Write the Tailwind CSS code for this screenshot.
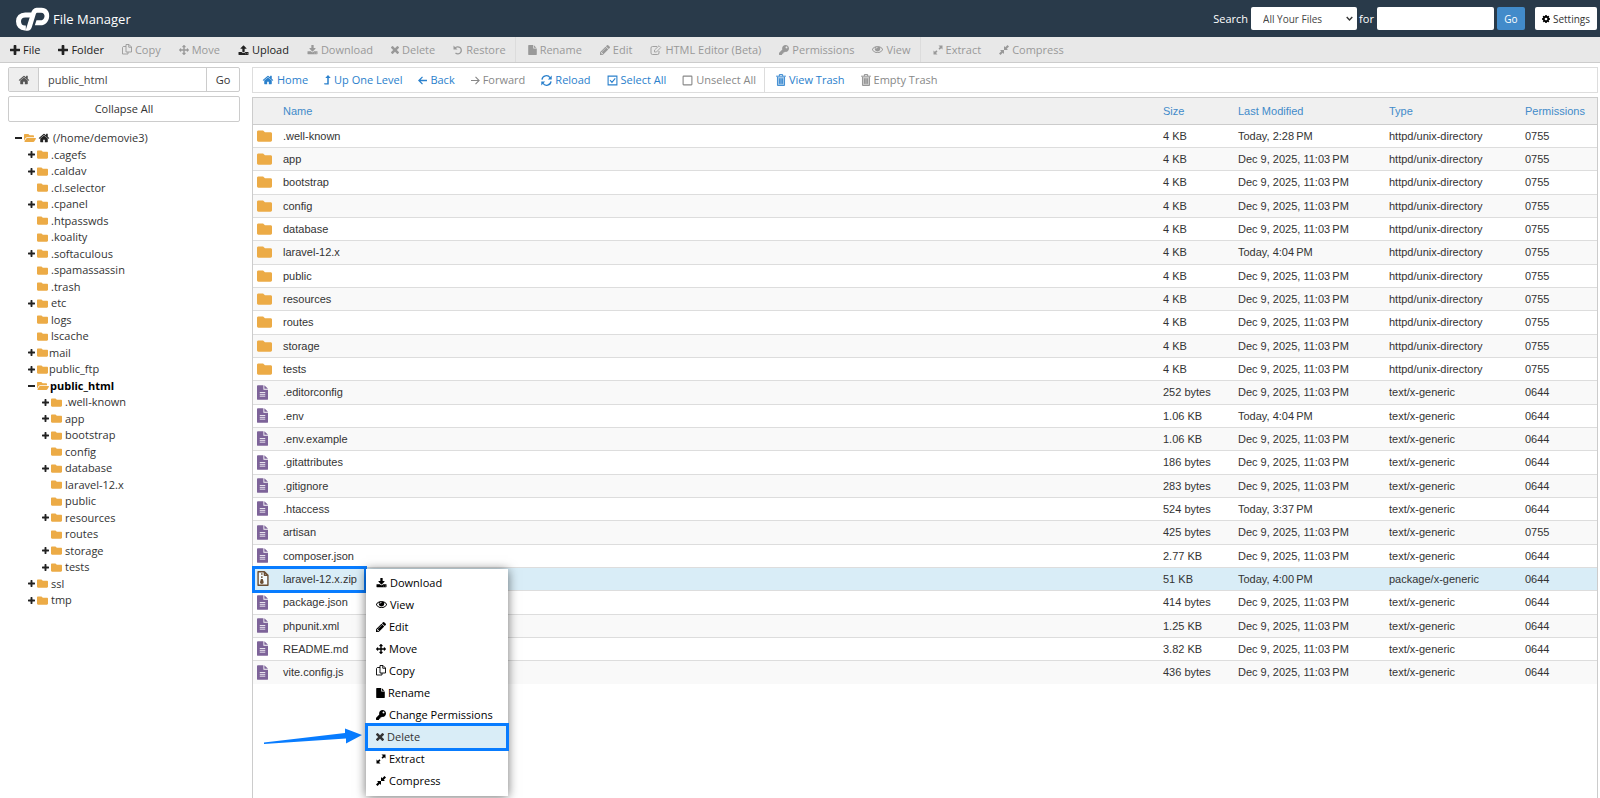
<!DOCTYPE html>
<html lang="en">
<head>
<meta charset="utf-8">
<title>File Manager</title>
<script src="https://cdn.jsdelivr.net/npm/@tailwindcss/browser@4"></script>
</head>
<body class="flex h-screen flex-col overflow-hidden bg-white font-['Open_Sans',sans-serif] text-[11px] leading-4 text-[#333]">

<svg class="hidden" aria-hidden="true">
  <symbol id="plus" viewBox="192 128 1408 1408"><path d="M1600 736v192q0 40-28 68t-68 28h-416v416q0 40-28 68t-68 28h-192q-40 0-68-28t-28-68v-416h-416q-40 0-68-28t-28-68v-192q0-40 28-68t68-28h416v-416q0-40 28-68t68-28h192q40 0 68 28t28 68v416h416q40 0 68 28t28 68z"/></symbol>
  <symbol id="home" viewBox="64 128 1664 1536"><path d="M1472 992v480q0 26-19 45t-45 19h-384v-384h-256v384h-384q-26 0-45-19t-19-45v-480q0-1 .5-3t.5-3l575-474 575 474q1 2 1 6zm223-69l-62 74q-8 9-21 11h-3q-13 0-21-7l-692-577-692 577q-12 8-24 7-13-2-21-11l-62-74q-8-10-7-23.500t11-21.500l719-599q32-26 76-26t76 26l244 204v-195q0-14 9-23t23-9h192q14 0 23 9t9 23v408l219 182q10 8 11 21.500t-7 23.500z"/></symbol>
  <symbol id="download" viewBox="64 0 1664 1664"><path d="M1344 1344q0-26-19-45t-45-19-45 19-19 45 19 45 45 19 45-19 19-45zm256 0q0-26-19-45t-45-19-45 19-19 45 19 45 45 19 45-19 19-45zm128-224v320q0 40-28 68t-68 28h-1472q-40 0-68-28t-28-68v-320q0-40 28-68t68-28h465l135 136q58 56 136 56t136-56l136-136h464q40 0 68 28t28 68zm-325-569q17 41-14 70l-448 448q-18 19-45 19t-45-19l-448-448q-31-29-14-70 17-39 59-39h256v-448q0-26 19-45t45-19h256q26 0 45 19t19 45v448h256q42 0 59 39z"/></symbol>
  <symbol id="upload" viewBox="64 0 1664 1664"><path d="M1344 1472q0-26-19-45t-45-19-45 19-19 45 19 45 45 19 45-19 19-45zm256 0q0-26-19-45t-45-19-45 19-19 45 19 45 45 19 45-19 19-45zm128-224v320q0 40-28 68t-68 28h-1472q-40 0-68-28t-28-68v-320q0-40 28-68t68-28h427q21 56 70.500 92t110.500 36h256q61 0 110.500-36t70.500-92h427q40 0 68 28t28 68zm-325-648q-17 40-59 40h-256v448q0 26-19 45t-45 19h-256q-26 0-45-19t-19-45v-448h-256q-42 0-59-40-17-39 14-69l448-448q18-19 45-19t45 19l448 448q31 30 14 69z"/></symbol>
  <symbol id="times" viewBox="302 366 1188 1188"><path d="M1490 1322q0 40-28 68l-136 136q-28 28-68 28t-68-28l-294-294-294 294q-28 28-68 28t-68-28l-136-136q-28-28-28-68t28-68l294-294-294-294q-28-28-28-68t28-68l136-136q28-28 68-28t68 28l294 294 294-294q28-28 68-28t68 28l136 136q28 28 28 68t-28 68l-294 294 294 294q28 28 28 68z"/></symbol>
  <symbol id="eye" viewBox="0 320 1792 1280"><path d="M1664 960q-152-236-381-353 61 104 61 225 0 185-131.500 316.500t-316.500 131.500-316.500-131.500-131.500-316.500q0-121 61-225-229 117-381 353 133 205 333.500 326.500t434.500 121.500 434.500-121.500 333.500-326.500zm-720-384q0-20-14-34t-34-14q-125 0-214.500 89.500t-89.500 214.500q0 20 14 34t34 14 34-14 14-34q0-86 61-147t147-61q20 0 34-14t14-34zm848 384q0 34-20 69-140 230-376.500 368.500t-499.500 138.500-499.500-139-376.500-368q-20-35-20-69t20-69q140-229 376.500-368t499.500-139 499.500 139 376.500 368q20 35 20 69z"/></symbol>
  <symbol id="pencil" viewBox="128 148 1516 1516"><path d="M491 1536l91-91-235-235-91 91v107h128v128h107zm523-928q0-22-22-22-10 0-17 7l-542 542q-7 7-7 17 0 22 22 22 10 0 17-7l542-542q7-7 7-17zm-54-192l416 416-832 832h-416v-416zm683 96q0 53-37 90l-166 166-416-416 166-165q36-38 90-38 53 0 91 38l235 234q37 39 37 91z"/></symbol>
  <symbol id="move" viewBox="0 0 1792 1792"><path d="M1792 896q0 26-19 45l-256 256q-19 19-45 19t-45-19-19-45v-128h-384v384h128q26 0 45 19t19 45-19 45l-256 256q-19 19-45 19t-45-19l-256-256q-19-19-19-45t19-45 45-19h128v-384h-384v128q0 26-19 45t-45 19-45-19l-256-256q-19-19-19-45t19-45l256-256q19-19 45-19t45 19 19 45v128h384v-384h-128q-26 0-45-19t-19-45 19-45l256-256q19-19 45-19t45 19l256 256q19 19 19 45t-19 45-45 19h-128v384h384v-128q0-26 19-45t45-19 45 19l256 256q19 19 19 45z"/></symbol>
  <symbol id="copy" viewBox="0 0 20 22"><path fill="none" stroke="currentColor" stroke-width="1.800" stroke-linejoin="round" d="M8 1h6l5 5v10H8zM13.500 1v5.500H19M8 5H2.500L1 6.500V20h11v-4"/></symbol>
  <symbol id="file" viewBox="128 0 1536 1792"><path d="M1152 512v-472q22 14 36 28l408 408q14 14 28 36h-472zm-128 32q0 40 28 68t68 28h544v1056q0 40-28 68t-68 28h-1344q-40 0-68-28t-28-68v-1600q0-40 28-68t68-28h800v544z"/></symbol>
  <symbol id="key" viewBox="0 0 512 512"><path d="M512 176C512 273 433 352 336 352c-11 0-22-1-33-3l-24 27A24 24 0 0 1 261 384H224v40c0 13-11 24-24 24h-40v40c0 13-11 24-24 24H24c-13 0-24-11-24-24v-78c0-6 3-12 7-17l162-162C163 214 160 195 160 176 160 79 239 0 336 0c97 0 176 79 176 176zM336 128c0 27 21 48 48 48s48-21 48-48-21-48-48-48-48 21-48 48z"/></symbol>
  <symbol id="cog" viewBox="128 128 1536 1536"><path d="M1152 896q0-106-75-181t-181-75-181 75-75 181 75 181 181 75 181-75 75-181zm512-109v222q0 12-8 23t-20 13l-185 28q-19 54-39 91 35 50 107 138 10 12 10 25t-9 23q-27 37-99 108t-94 71q-12 0-26-9l-138-108q-44 23-91 38-16 136-29 186-7 28-36 28h-222q-14 0-24.500-8.500t-11.500-21.500l-28-184q-49-16-90-37l-141 107q-10 9-25 9-14 0-25-11-126-114-165-168-7-10-7-23 0-12 8-23 15-21 51-66.500t54-70.500q-27-50-41-99l-183-27q-13-2-21-12.500t-8-23.500v-222q0-12 8-23t19-13l186-28q14-46 39-92-40-57-107-138-10-12-10-24 0-10 9-23 26-36 98.500-107.500t94.500-71.500q13 0 26 10l138 107q44-23 91-38 16-136 29-186 7-28 36-28h222q14 0 24.500 8.500t11.500 21.500l28 184q49 16 90 37l142-107q9-9 24-9 13 0 25 10 129 119 165 170 7 8 7 22 0 12-8 23-15 21-51 66.500t-54 70.500q26 50 41 98l183 28q13 2 21 12.500t8 23.500z"/></symbol>
  <symbol id="restore" viewBox="0 0 20 20"><path d="M1 1v8h8z"/><path fill="none" stroke="currentColor" stroke-width="2.600" d="M4 6.500A7 7 0 1 1 5 16"/></symbol>
  <symbol id="editor" viewBox="0 0 22 20"><path fill="none" stroke="currentColor" stroke-width="1.800" d="M13 3H4a3 3 0 0 0-3 3v10a3 3 0 0 0 3 3h10a3 3 0 0 0 3-3v-4"/><path fill="none" stroke="currentColor" stroke-width="1.600" d="M8 14v-4l9-8.500 3.500 3.500-8.500 9z"/></symbol>
  <symbol id="extract" viewBox="0 0 20 20"><path d="M11 1h8v8l-2.700-2.700-3 3-2.300-2.300 3-3zM1 19v-8l2.700 2.700 3-3 2.300 2.300-3 3L9 19z"/></symbol>
  <symbol id="compress" viewBox="0 0 20 20"><path d="M10 2l2.500 2.500L17 0l3 3-4.500 4.500L18 10h-8zM2 10h8v8l-2.500-2.500L3 20l-3-3 4.500-4.500z"/></symbol>
  <symbol id="up" viewBox="0 0 14 20"><path d="M8 0l5.500 6H9.500v13H1l-1-2.500h6.500V6h-4z"/></symbol>
  <symbol id="back" viewBox="0 0 20 20"><path fill="none" stroke="currentColor" stroke-width="2.800" d="M10 2l-8 8 8 8M2 10h18"/></symbol>
  <symbol id="forward" viewBox="0 0 20 20"><path fill="none" stroke="currentColor" stroke-width="2.400" d="M10 2l8 8-8 8M18 10H0"/></symbol>
  <symbol id="reload" viewBox="0 0 20 20"><path d="M19.500 1v7h-7zM.5 19v-7h7z"/><path fill="none" stroke="currentColor" stroke-width="2.400" d="M1.800 8.500A8 8 0 0 1 16.500 5M18.200 11.500A8 8 0 0 1 3.500 15"/></symbol>
  <symbol id="checked" viewBox="0 0 20 20"><path fill="none" stroke="currentColor" stroke-width="2" d="M2 2h16v16H2zM5.500 9.500l3.500 4 6-7.500"/></symbol>
  <symbol id="unchecked" viewBox="0 0 20 20"><rect x="2" y="2" width="16" height="16" rx="1" fill="none" stroke="currentColor" stroke-width="2"/></symbol>
  <symbol id="trash" viewBox="0 0 18 22"><path fill="currentColor" fill-opacity=".45" d="M3 5h12v16H3z"/><path fill="none" stroke="currentColor" stroke-width="1.600" d="M0 4h18M6 4V1h6v3M2.500 5v16h13V5M6.500 8v10M9 8v10M11.500 8v10"/></symbol>
  <symbol id="folder" viewBox="0 64 512 384"><path d="M464 128H272l-64-64H48C21 64 0 85 0 112v288c0 27 21 48 48 48h416c27 0 48-21 48-48V176c0-27-21-48-48-48z"/></symbol>
  <symbol id="folder-open" viewBox="0 64 576 384"><path d="M573 292L500 416A64 64 0 0 1 445 448H45c-19 0-30-20-21-36l73-124A64 64 0 0 1 152 256h400c19 0 30 20 21 36zM152 224h328v-48c0-27-21-48-48-48H272l-64-64H48C21 64 0 85 0 112v278l69-118C86 242 118 224 152 224z"/></symbol>
  <symbol id="doc" viewBox="0 0 24 32"><path fill="#7d6399" d="M2 0h12v10h10v20a2 2 0 0 1-2 2H2a2 2 0 0 1-2-2V2a2 2 0 0 1 2-2zM16 0l8 8h-8z"/><path stroke="#fff" stroke-width="1.800" d="M6 16h12M6 20h12M6 24h12"/></symbol>
  <symbol id="zip" viewBox="0 0 24 32"><path fill="#f4fafd" stroke="#6a4e33" stroke-width="3" stroke-linejoin="round" d="M1.500 1.500H15l7.500 7.500v21.500h-21zM15 1.500V9h7.500"/><path fill="#6a4e33" d="M8 5h3v3H8zM8 11h3v4H8zM7.500 17h4l2 7a4 3.500 0 0 1-8 0z"/></symbol>
</svg>

<header class="flex h-[37px] shrink-0 items-center bg-[#293a4a] pr-[3px] pl-[15px] text-white">
  <h1 class="flex items-center gap-[3px] text-[13px]">
    <svg class="h-6 w-[35px]" viewBox="46 22 104 72" fill="none" role="img" aria-label="cPanel"><path stroke="#fff" stroke-width="15" d="M95 46H76C63 46 56 54 56 65c0 12 7 20 19 20h3"/><path fill="#fff" d="M77 93L94 39C98 28 104 24 114 24H125C141 24 150 36 148 51C146 67 136 77 122 77H105L110 62H121C128 62 133 58 134 51C135 44 131 39 124 39H114C110 39 109 40 108 43L96 82C94 89 90 93 83 93z"/></svg>
    File Manager
  </h1>
  <form class="ml-auto flex items-center" onsubmit="return false">
    <label for="scope" class="mr-[3px]">Search</label>
    <span class="relative">
      <select id="scope" class="h-[23px] w-[106px] appearance-none rounded-xs bg-white pl-3 text-[10px] text-[#444]"><option>All Your Files</option></select>
      <svg class="pointer-events-none absolute top-2 right-1 h-[7px] w-[7px]" viewBox="0 0 10 10" fill="none" stroke="#333" stroke-width="2"><path d="M1 3l4 4 4-4"/></svg>
    </span>
    <label for="term" class="mr-[3px] ml-[2px]">for</label>
    <input id="term" type="text" class="h-[23px] w-[117px] rounded-xs bg-white px-2 text-[#333]">
    <button type="submit" class="ml-[3px] h-[23px] w-7 rounded-xs bg-[#428bca] text-[10px]">Go</button>
    <button type="button" class="ml-[10px] flex h-[23px] items-center gap-[3px] rounded-xs bg-white px-[7px] text-[10px] text-[#333]"><svg class="size-2 fill-black"><use href="#cog"/></svg>Settings</button>
  </form>
</header>

<nav id="toolbar" aria-label="File actions" class="flex h-[26px] shrink-0 items-center border-b border-[#ccc] bg-[#e8e8e8] pl-px"></nav>

<div class="flex min-h-0 flex-1 gap-3 pt-1 pr-[2px] pl-2">
  <aside class="w-[232px] shrink-0">
    <form class="flex h-[25px] overflow-hidden rounded-xs border border-[#ccc]" onsubmit="return false">
      <button type="button" aria-label="Home directory" class="flex w-[30px] items-center justify-center border-r border-[#ccc] bg-[#eee]"><svg class="h-[10px] w-3 fill-[#555]"><use href="#home"/></svg></button>
      <input type="text" aria-label="Path" value="public_html" class="min-w-0 flex-1 px-[9px] text-[#444]">
      <button type="submit" class="w-[33px] border-l border-[#ccc]">Go</button>
    </form>
    <button type="button" class="mt-1 h-[26px] w-full rounded-xs border border-[#ccc]">Collapse All</button>
    <ul id="tree" class="mt-2 pl-[6px]"></ul>
  </aside>

  <main class="flex min-w-0 flex-1 flex-col">
    <nav id="actions" aria-label="Navigation" class="flex h-[26px] shrink-0 items-center border border-[#ddd] pl-px"></nav>
    <div class="mt-1 flex-1 border border-b-0 border-[#ccc]">
      <table class="w-full table-fixed font-['Liberation_Sans',Arial,sans-serif] text-[11px] leading-4">
        <colgroup><col class="w-[30px]"><col><col class="w-[75px]"><col class="w-[151px]"><col class="w-[136px]"><col class="w-[72px]"></colgroup>
        <thead>
          <tr class="h-[26px] border-b border-[#ccc] bg-[#f0f0f0] text-left text-[#428bca]">
            <td class="p-0"></td>
            <th class="p-0 font-normal">Name</th><th class="p-0 font-normal">Size</th><th class="p-0 font-normal">Last Modified</th><th class="p-0 font-normal">Type</th><th class="p-0 font-normal">Permissions</th>
          </tr>
        </thead>
        <tbody id="files"></tbody>
      </table>
    </div>
  </main>
</div>

<template id="menu">
  <div class="pointer-events-none absolute -top-[5px] -left-[31px] z-10 h-[27px] w-[115px] border-[3px] border-[#087cff]"></div>
  <svg class="absolute top-[157px] -left-[20px] z-10 h-4 w-[100px] fill-[#087cff]" viewBox="0 0 100 16" aria-hidden="true"><path d="M1 14.500L82 5V.5L99 7 83 15.500V10.500L1 16z"/></svg>
  <ul role="menu" class="absolute -top-[2px] left-[83px] z-10 w-[142px] bg-white pt-[3px] pb-1 font-['Open_Sans',sans-serif] text-black shadow-[0_1px_10px_rgba(0,0,0,0.55)]"></ul>
</template>

<script>
const icon = (name, cls) => `<svg class="shrink-0 fill-current ${cls}" aria-hidden="true"><use href="#${name}"/></svg>`;

const size = {
  plus: 'size-[10px]', copy: 'h-[11px] w-[10px]', move: 'size-[10px]', upload: 'h-[10px] w-[11px]', download: 'h-[10px] w-[11px]',
  times: 'size-2', restore: 'size-[10px]', file: 'h-[10px] w-[9px]', pencil: 'size-[10px]', editor: 'h-[10px] w-3', key: 'size-[10px]',
  eye: 'h-[9px] w-[11px]', extract: 'size-[10px]', compress: 'size-[10px]', home: 'h-[10px] w-3', up: 'h-[10px] w-[7px]',
  back: 'size-[9px]', forward: 'size-[9px]', reload: 'size-[11px]', checked: 'size-[11px]', unchecked: 'size-[11px]', trash: 'h-3 w-[10px]'
};

const bar = (id, items, pad, on, off, rule) => {
  document.getElementById(id).innerHTML = items.map(i => i === '|'
    ? `<span class="mr-[3px] w-px self-stretch ${rule}"></span>`
    : `<button type="button" class="flex items-center gap-[3px] ${pad} ${i[2] ? on : off}" ${i[2] ? '' : 'disabled'}>${icon(i[0], size[i[0]])}${i[1]}</button>`).join('');
};

bar('toolbar', [
  ['plus', 'File', 1], ['plus', 'Folder', 1], ['copy', 'Copy'], ['move', 'Move'], ['upload', 'Upload', 1], ['download', 'Download'],
  ['times', 'Delete'], ['restore', 'Restore'], '|', ['file', 'Rename'], ['pencil', 'Edit'], ['editor', 'HTML Editor (Beta)'],
  ['key', 'Permissions'], ['eye', 'View'], '|', ['extract', 'Extract'], ['compress', 'Compress']
], 'px-[9px]', 'text-[#222]', 'text-[#999]', 'bg-[#dcdcdc]');

bar('actions', [
  ['home', 'Home', 1], ['up', 'Up One Level', 1], ['back', 'Back', 1], ['forward', 'Forward'], ['reload', 'Reload', 1],
  ['checked', 'Select All', 1], ['unchecked', 'Unselect All'], '|', ['trash', 'View Trash', 1], ['trash', 'Empty Trash']
], 'px-2', 'text-[#2a80cc]', 'text-[#888]', 'bg-[#ddd]');

const indent = ['', 'ml-[13px]', 'ml-[27px]'];
const tree = [
  [0, '-', '(/home/demovie3)'], [1, '+', '.cagefs'], [1, '+', '.caldav'], [1, '', '.cl.selector'], [1, '+', '.cpanel'],
  [1, '', '.htpasswds'], [1, '', '.koality'], [1, '+', '.softaculous'], [1, '', '.spamassassin'], [1, '', '.trash'],
  [1, '+', 'etc'], [1, '', 'logs'], [1, '', 'lscache'], [1, '+', 'mail'], [1, '+', 'public_ftp'], [1, '-', 'public_html'],
  [2, '+', '.well-known'], [2, '+', 'app'], [2, '+', 'bootstrap'], [2, '', 'config'], [2, '+', 'database'], [2, '', 'laravel-12.x'],
  [2, '', 'public'], [2, '+', 'resources'], [2, '', 'routes'], [2, '+', 'storage'], [2, '+', 'tests'], [1, '+', 'ssl'], [1, '+', 'tmp']
];
const tight = ['mail', 'public_ftp', 'public_html'];
document.getElementById('tree').innerHTML = tree.map(([level, sign, name]) => `
  <li class="flex h-4 items-center even:h-[17px] ${indent[level]}">
    <span class="flex w-[10px] shrink-0 pl-px text-[#222]">${sign === '+' ? icon('plus', 'size-[7px]') : sign === '-' ? '<span class="h-[2px] w-[7px] bg-[#222]"></span>' : ''}</span>
    <span class="flex text-[#ecab46]">${sign === '-' ? icon('folder-open', 'h-2 w-3') : icon('folder', 'h-[9px] w-[11px]')}</span>
    ${level ? '' : '<span class="ml-[2px] flex text-[#222]">' + icon('home', 'h-[10px] w-3') + '</span>'}
    <a href="#" class="${tight.includes(name) ? 'ml-px' : 'ml-[3px]'} ${name === 'public_html' ? 'font-bold text-black' : ''}">${name}</a>
  </li>`).join('');

const dec = 'Dec 9, 2025, 11:03\u202fPM', dir = 'httpd/unix-directory', txt = 'text/x-generic';
const files = [
  ['.well-known', '4 KB', 'Today, 2:28\u202fPM', dir, '0755'], ['app', '4 KB', dec, dir, '0755'], ['bootstrap', '4 KB', dec, dir, '0755'],
  ['config', '4 KB', dec, dir, '0755'], ['database', '4 KB', dec, dir, '0755'], ['laravel-12.x', '4 KB', 'Today, 4:04\u202fPM', dir, '0755'],
  ['public', '4 KB', dec, dir, '0755'], ['resources', '4 KB', dec, dir, '0755'], ['routes', '4 KB', dec, dir, '0755'],
  ['storage', '4 KB', dec, dir, '0755'], ['tests', '4 KB', dec, dir, '0755'], ['.editorconfig', '252 bytes', dec, txt, '0644'],
  ['.env', '1.06 KB', 'Today, 4:04\u202fPM', txt, '0644'], ['.env.example', '1.06 KB', dec, txt, '0644'],
  ['.gitattributes', '186 bytes', dec, txt, '0644'], ['.gitignore', '283 bytes', dec, txt, '0644'],
  ['.htaccess', '524 bytes', 'Today, 3:37\u202fPM', txt, '0644'], ['artisan', '425 bytes', dec, txt, '0755'],
  ['composer.json', '2.77 KB', dec, txt, '0644'], ['laravel-12.x.zip', '51 KB', 'Today, 4:00\u202fPM', 'package/x-generic', '0644'],
  ['package.json', '414 bytes', dec, txt, '0644'], ['phpunit.xml', '1.25 KB', dec, txt, '0644'],
  ['README.md', '3.82 KB', dec, txt, '0644'], ['vite.config.js', '436 bytes', dec, txt, '0644']
];
const menu = document.getElementById('menu').innerHTML;
document.getElementById('files').innerHTML = files.map(f => {
  const zip = f[0].endsWith('.zip');
  const pic = f[3] === dir ? '<span class="flex text-[#ecab46]">' + icon('folder', 'h-3 w-[15px]') + '</span>' : icon(zip ? 'zip' : 'doc', zip ? 'h-[15px] w-3' : 'h-[15px] w-[11px]');
  return `<tr class="h-[23px] border-b border-[#ddd] last:border-b-0 nth-[3n]:h-6 ${zip ? 'bg-[#d9edf7]' : 'odd:bg-white even:bg-[#f9f9f9]'}">
    <td class="p-0 pl-1">${pic}</td>
    <td class="p-0"><div class="relative">${f[0]}${zip ? menu : ''}</div></td>
    ${f.slice(1).map(v => `<td class="p-0 whitespace-nowrap">${v}</td>`).join('')}
  </tr>`;
}).join('');

document.querySelector('[role=menu]').innerHTML = [
  ['download', 'Download'], ['eye', 'View'], ['pencil', 'Edit'], ['move', 'Move'], ['copy', 'Copy'], ['file', 'Rename'],
  ['key', 'Change Permissions'], ['times', 'Delete'], ['extract', 'Extract'], ['compress', 'Compress']
].map(([i, t]) => `<li role="none" class="relative h-[22px] ${i === 'times' ? 'bg-[#d9edf7] text-[#333]' : ''}">
    <button type="button" role="menuitem" class="flex h-full w-full items-center gap-[3px] pl-[10px]">${icon(i, size[i])}${t}</button>
    ${i === 'times' ? '<span class="pointer-events-none absolute -inset-x-px -inset-y-[3px] border-[3px] border-[#087cff]"></span>' : ''}
  </li>`).join('');
</script>
</body>
</html>
